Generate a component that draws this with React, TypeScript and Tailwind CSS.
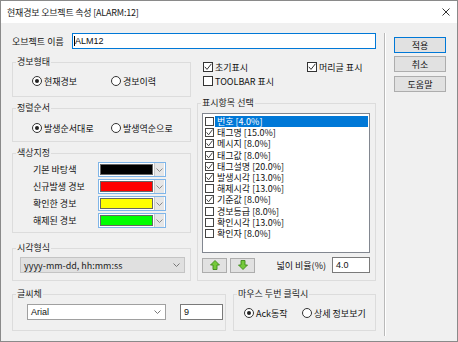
import React from "react";

function Check({ on }: { on?: boolean }) {
  return (
    <span className="w-[10px] h-[10px] border border-[#333333] bg-white flex items-center justify-center shrink-0">
      {on && (
        <svg width="8" height="8" viewBox="0 0 8 8">
          <path d="M0.8 3.8 L3 6.4 L7.4 0.8" fill="none" stroke="#333333" strokeWidth="1" />
        </svg>
      )}
    </span>
  );
}

function SmallCheck({ on }: { on?: boolean }) {
  return (
    <span className="w-[9px] h-[9px] border border-[#444444] bg-white flex items-center justify-center shrink-0">
      {on && (
        <svg width="7" height="7" viewBox="0 0 7 7">
          <path d="M0.6 3.4 L2.6 5.8 L6.5 0.6" fill="none" stroke="#444444" strokeWidth="1" />
        </svg>
      )}
    </span>
  );
}

function Radio({ on }: { on?: boolean }) {
  return (
    <span className="w-[10px] h-[10px] rounded-full border border-[#333333] bg-white flex items-center justify-center shrink-0">
      {on && <span className="w-[4px] h-[4px] rounded-full bg-[#222222]" />}
    </span>
  );
}

function Chevron({ color = "#666666" }: { color?: string }) {
  return (
    <svg width="7" height="4" viewBox="0 0 7 4">
      <path d="M0.5 0.5 L3.5 3.5 L6.5 0.5" fill="none" stroke={color} strokeWidth="1" />
    </svg>
  );
}

function Group({ label, className, children }: { label: string; className: string; children?: React.ReactNode }) {
  return (
    <div className={"relative border border-[#dcdcdc] " + className}>
      <span className="absolute -top-[7px] left-[3px] px-[1px] bg-[#f0f0f0] leading-[12px] text-[#222222]">{label}</span>
      {children}
    </div>
  );
}

function ColorCombo({ color }: { color: string }) {
  return (
    <div className="w-[68px] h-[15px] border border-[#7fb5e8] bg-white flex items-center pl-[1px] pr-[1px]">
      <span className="w-[53px] h-[11px] border border-[#666666]" style={{ backgroundColor: color }} />
      <span className="ml-auto w-[10px] h-[13px] bg-[#e6e6e6] border-l border-[#c8c8c8] flex items-center justify-center">
        <Chevron color="#8a8a8a" />
      </span>
    </div>
  );
}

const items: [string, boolean][] = [
  ["번호 [4.0%]", false],
  ["태그명 [15.0%]", true],
  ["메시지 [8.0%]", true],
  ["태그값 [8.0%]", true],
  ["태그설명 [20.0%]", true],
  ["발생시각 [13.0%]", true],
  ["해제시각 [13.0%]", false],
  ["기준값 [8.0%]", true],
  ["경보등급 [8.0%]", false],
  ["확인시각 [13.0%]", false],
  ["확인자 [8.0%]", false],
];

function Arrow({ up }: { up?: boolean }) {
  return (
    <svg width="10" height="10" viewBox="0 0 10 10">
      <polygon
        points={up ? "5,0.5 9.5,5 7,5 7,9.5 3,9.5 3,5 0.5,5" : "5,9.5 9.5,5 7,5 7,0.5 3,0.5 3,5 0.5,5"}
        fill="#74c93a"
        stroke="#3d8a18"
        strokeWidth="0.9"
      />
    </svg>
  );
}

export default function App() {
  return (
    <div className="w-[458px] h-[342px] flex flex-col border border-[#8a8a8a] bg-[#f0f0f0] text-[9px] leading-[11px] text-[#111111] font-['Noto_Sans_CJK_KR','Noto_Sans',sans-serif]">
      {/* title bar */}
      <div className="h-[22px] bg-white flex items-center pl-[6px] pr-[7px] shrink-0">
        <span className="text-[9px] tracking-[-0.2px] text-[#1a1a1a]">현재경보 오브젝트 속성 [ALARM:12]</span>
        <svg className="ml-auto" width="8" height="8" viewBox="0 0 8 8">
          <path d="M0.5 0.5 L7.5 7.5 M7.5 0.5 L0.5 7.5" stroke="#333333" strokeWidth="1" />
        </svg>
      </div>

      {/* body */}
      <div className="flex-1 flex">
        {/* left content */}
        <div className="w-[375px] pl-[11px] pt-[10px] flex flex-col">
          {/* name row */}
          <div className="flex items-center h-[16px]">
            <span className="w-[60px]">오브젝트 이름</span>
            <div className="flex-1 h-[16px] border border-[#0078d7] bg-white flex items-center pl-[1px]">
              <span className="w-[1px] h-[10px] bg-black" />
              <span className="font-['Liberation_Sans',sans-serif] text-[9px]">ALM12</span>
            </div>
          </div>

          {/* middle area */}
          <div className="flex gap-[6px] mt-[13px]">
            {/* left column */}
            <div className="w-[179px] flex flex-col">
              <Group label="경보형태" className="h-[35px] pt-[13px] pl-[19px]">
                <div className="flex items-center h-[10px]">
                  <div className="w-[79px] flex items-center gap-[2px]">
                    <Radio on />
                    <span>현재경보</span>
                  </div>
                  <div className="flex items-center gap-[2px]">
                    <Radio />
                    <span>경보이력</span>
                  </div>
                </div>
              </Group>

              <Group label="정렬순서" className="h-[34px] mt-[11px] pt-[14px] pl-[19px]">
                <div className="flex items-center h-[10px]">
                  <div className="w-[79px] flex items-center gap-[2px]">
                    <Radio on />
                    <span>발생순서대로</span>
                  </div>
                  <div className="flex items-center gap-[2px]">
                    <Radio />
                    <span>발생역순으로</span>
                  </div>
                </div>
              </Group>

              <Group label="색상지정" className="h-[80px] mt-[11px] pt-[8px] pl-[20px] flex flex-col gap-[2px]">
                {[
                  ["기본 바탕색", "#000000"],
                  ["신규발생 경보", "#ff0000"],
                  ["확인한 경보", "#ffff00"],
                  ["해제된 경보", "#00ff00"],
                ].map(([l, c]) => (
                  <div key={l} className="flex items-center h-[15px]">
                    <span className="w-[65px]">{l}</span>
                    <ColorCombo color={c} />
                  </div>
                ))}
              </Group>

              <Group label="시각형식" className="h-[33px] mt-[15px] pt-[8px] pl-[7px]">
                <div className="w-[165px] h-[16px] bg-[#e0e0e0] border border-[#c4c4c4] flex items-center pl-[3px] pr-[4px]">
                  <span className="text-[#222222]">yyyy-mm-dd, hh:mm:ss</span>
                  <span className="ml-auto">
                    <Chevron color="#777777" />
                  </span>
                </div>
              </Group>
            </div>

            {/* right column */}
            <div className="w-[179px] flex flex-col">
              <div className="flex items-center h-[10px] pl-[6px]">
                <div className="w-[104px] flex items-center gap-[2px]">
                  <Check on />
                  <span>초기표시</span>
                </div>
                <div className="flex items-center gap-[2px]">
                  <Check on />
                  <span>머리글 표시</span>
                </div>
              </div>
              <div className="flex items-center h-[10px] pl-[6px] mt-[4px] gap-[2px]">
                <Check />
                <span>TOOLBAR 표시</span>
              </div>

              <Group label="표시항목 선택" className="h-[178px] mt-[17px] pt-[9px] pl-[4px] pr-[5px] flex flex-col">
                <div className="h-[140px] border border-[#828790] bg-white pt-[2px] pl-[2px] pr-[1px] flex flex-col">
                  {items.map(([t, on], i) => (
                    <div key={t} className="flex items-center h-[11.2px]">
                      <SmallCheck on={on} />
                      <span
                        className={
                          i === 0
                            ? "ml-[1px] flex-1 h-[11px] bg-[#0078d7] text-white pl-[2px] flex items-center"
                            : "ml-[1px] flex-1 h-[11px] pl-[2px] flex items-center"
                        }
                      >
                        {t}
                      </span>
                    </div>
                  ))}
                </div>
                <div className="flex items-center mt-[4px] h-[16px]">
                  <div className="w-[25px] h-[15px] bg-[#e1e1e1] border border-[#adadad] flex items-center justify-center">
                    <Arrow up />
                  </div>
                  <div className="ml-[3px] w-[25px] h-[15px] bg-[#e1e1e1] border border-[#adadad] flex items-center justify-center">
                    <Arrow />
                  </div>
                  <span className="ml-auto mr-[6px]">넓이 비율(%)</span>
                  <div className="w-[38px] h-[16px] bg-white border border-[#7a7a7a] flex items-center pl-[3px]">
                    <span className="font-['Liberation_Sans',sans-serif] text-[9px]">4.0</span>
                  </div>
                </div>
              </Group>
            </div>
          </div>

          {/* bottom row */}
          <div className="flex gap-[7px] mt-[13px]">
            <Group label="글씨체" className="w-[214px] h-[37px] pt-[9px] pl-[14px] flex">
              <div className="w-[139px] h-[16px] bg-white border border-[#a0a0a0] flex items-center pl-[3px] pr-[4px]">
                <span className="font-['Liberation_Sans',sans-serif] text-[9px]">Arial</span>
                <span className="ml-auto">
                  <Chevron color="#777777" />
                </span>
              </div>
              <div className="ml-[14px] w-[43px] h-[16px] bg-white border border-[#7a7a7a] flex items-center pl-[3px]">
                <span className="font-['Liberation_Sans',sans-serif] text-[9px]">9</span>
              </div>
            </Group>
            <Group label="마우스 두번 클릭시" className="w-[143px] h-[37px] pt-[13px] pl-[10px]">
              <div className="flex items-center h-[10px]">
                <div className="w-[58px] flex items-center gap-[2px]">
                  <Radio on />
                  <span>Ack동작</span>
                </div>
                <div className="flex items-center gap-[2px]">
                  <Radio />
                  <span>상세 정보보기</span>
                </div>
              </div>
            </Group>
          </div>
        </div>

        {/* separator */}
        <div className="ml-[8px] mt-[10px] mb-[5px] w-[2px] border-l border-[#b9b9b9] border-r border-r-white" />

        {/* buttons */}
        <div className="ml-[8px] pt-[14px] flex flex-col w-[52px]">
          <button className="h-[16px] bg-[#e1e1e1] border border-[#0078d7] flex items-center justify-center text-[9px]">적용</button>
          <button className="mt-[3px] h-[16px] bg-[#e1e1e1] border border-[#adadad] flex items-center justify-center text-[9px]">취소</button>
          <button className="mt-[4px] h-[16px] bg-[#e1e1e1] border border-[#adadad] flex items-center justify-center text-[9px]">도움말</button>
        </div>
      </div>
    </div>
  );
}
